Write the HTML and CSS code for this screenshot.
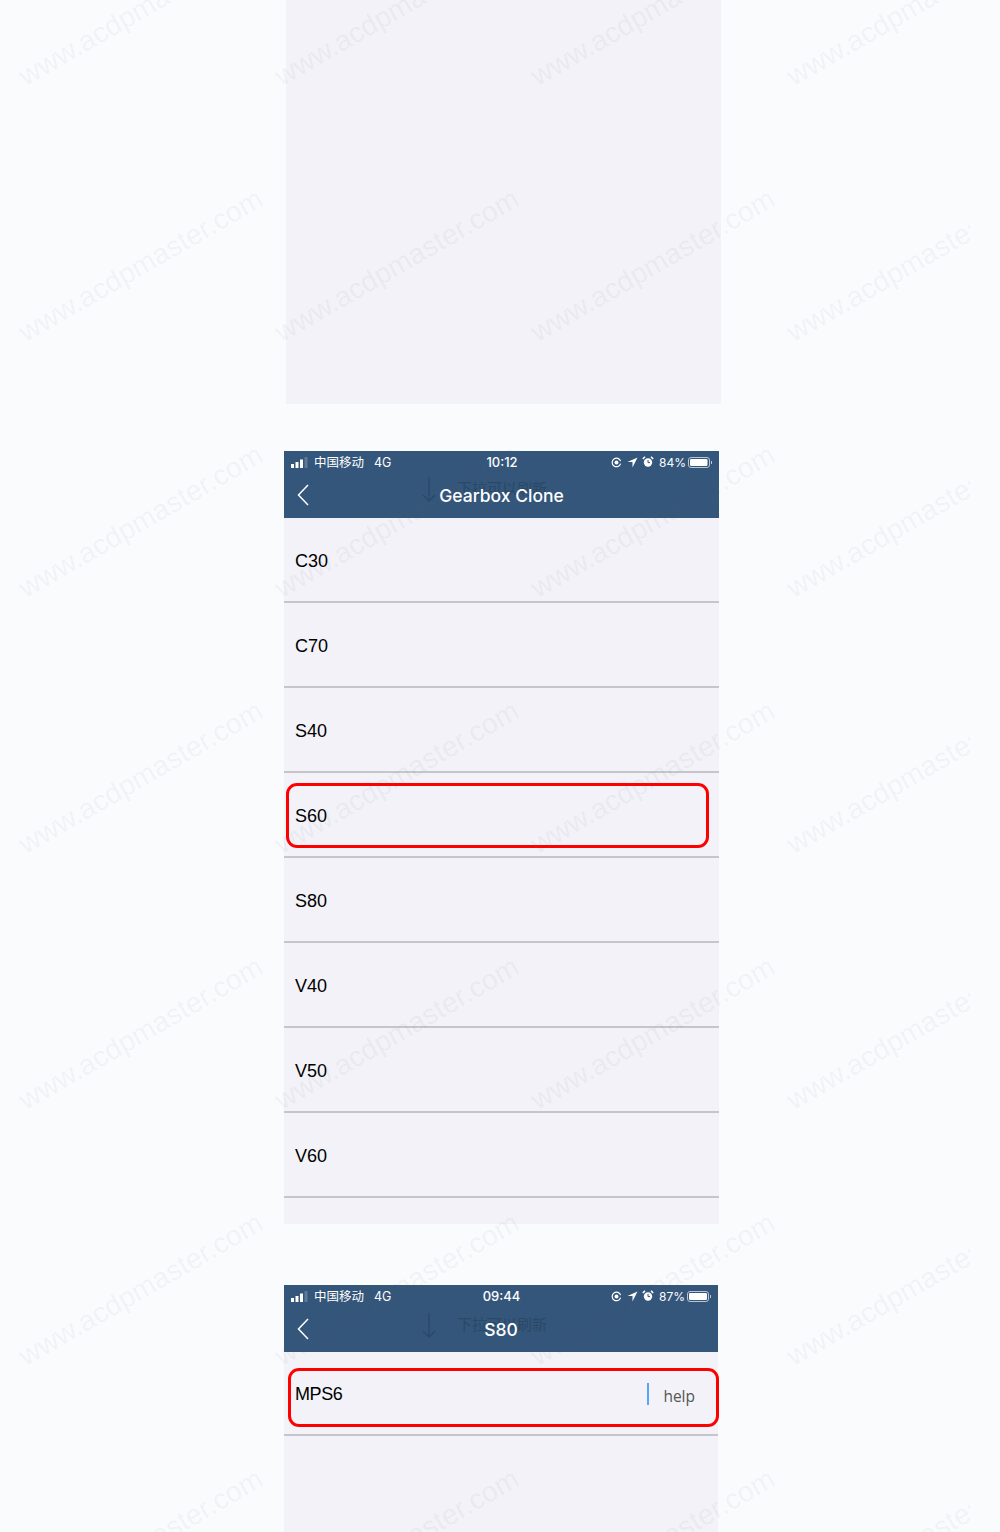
FILE: index.html
```html
<!DOCTYPE html>
<html lang="en">
<head>
    <meta charset="UTF-8">
    <meta name="viewport" content="width=device-width, initial-scale=1.0">
    <title>Gearbox Clone</title>
    <link rel="stylesheet" href="styles.css">
</head>
<body>
    <div class="blank-panel"></div>

    <section class="screen screen-list">
        <header class="app-header">
            <div class="status-bar">
                <div class="status-left">
                    <svg class="signal" width="17" height="11" viewBox="0 0 17 11"><rect x="0" y="7" width="3" height="4" fill="#fff"/><rect x="4.500" y="5" width="3" height="6" fill="#fff"/><rect x="9" y="2.500" width="3" height="8.500" fill="#fff"/><rect x="13.500" y="0" width="3" height="11" fill="#5f7a97"/></svg>
                    <span class="carrier">中国移动</span>
                    <span class="network">4G</span>
                </div>
                <div class="time">10:12</div>
                <div class="status-right">
                    <svg width="11" height="11" viewBox="0 0 11 11"><path d="M9.6 6.6A4.3 4.3 0 1 1 9.6 4.2" fill="none" stroke="#fff" stroke-width="1.2"/><circle cx="5.5" cy="5.5" r="2" fill="#fff"/></svg>
                    <svg class="loc" width="11" height="11" viewBox="0 0 11 11"><path d="M10.5.5 .5 5h5v5.5z" fill="#fff"/></svg>
                    <svg class="alarm" width="12" height="12" viewBox="0 0 12 12"><circle cx="6" cy="6.5" r="4.2" fill="#fff"/><path d="M.8 3 3 .8M11.2 3 9 .8" stroke="#fff" stroke-width="1.6"/><path d="M6 4v2.6h2" fill="none" stroke="#34567a"/></svg>
                    <span class="battery-text">84%</span>
                    <svg width="25" height="11" viewBox="0 0 25 11"><rect x=".5" y=".5" width="21" height="10" rx="2.5" fill="none" stroke="#b9c6d4"/><rect x="2" y="2" width="17.5" height="7" rx="1.2" fill="#fff"/><rect x="23" y="4" width="1" height="3" fill="#b9c6d4"/></svg>
                </div>
            </div>
            <nav class="nav-bar">
                <svg class="back" width="12" height="22" viewBox="0 0 12 22"><path d="M11 1 1.500 11 11 21" fill="none" stroke="#fff" stroke-width="1.500"/></svg>
                <div class="pull-hint hint-list">
                    <svg width="14" height="25" viewBox="0 0 14 25"><path d="M7 0v24M1 18l6 6 6-6" fill="none" stroke="#2a4868" stroke-width="1.300"/></svg>
                    <span>下拉可以刷新</span>
                </div>
                <h1 class="nav-title">Gearbox Clone</h1>
            </nav>
        </header>
        <ul class="item-list">
            <li class="item">C30</li>
            <li class="item">C70</li>
            <li class="item">S40</li>
            <li class="item item-marked">S60<span class="red-box box-s60"></span></li>
            <li class="item">S80</li>
            <li class="item">V40</li>
            <li class="item">V50</li>
            <li class="item">V60</li>
        </ul>
    </section>

    <section class="screen screen-detail">
        <header class="app-header">
            <div class="status-bar">
                <div class="status-left">
                    <svg class="signal" width="17" height="11" viewBox="0 0 17 11"><rect x="0" y="7" width="3" height="4" fill="#fff"/><rect x="4.500" y="5" width="3" height="6" fill="#fff"/><rect x="9" y="2.500" width="3" height="8.500" fill="#fff"/><rect x="13.500" y="0" width="3" height="11" fill="#5f7a97"/></svg>
                    <span class="carrier">中国移动</span>
                    <span class="network">4G</span>
                </div>
                <div class="time">09:44</div>
                <div class="status-right">
                    <svg width="11" height="11" viewBox="0 0 11 11"><path d="M9.6 6.6A4.3 4.3 0 1 1 9.6 4.2" fill="none" stroke="#fff" stroke-width="1.2"/><circle cx="5.5" cy="5.5" r="2" fill="#fff"/></svg>
                    <svg class="loc" width="11" height="11" viewBox="0 0 11 11"><path d="M10.5.5 .5 5h5v5.5z" fill="#fff"/></svg>
                    <svg class="alarm" width="12" height="12" viewBox="0 0 12 12"><circle cx="6" cy="6.5" r="4.2" fill="#fff"/><path d="M.8 3 3 .8M11.2 3 9 .8" stroke="#fff" stroke-width="1.6"/><path d="M6 4v2.6h2" fill="none" stroke="#34567a"/></svg>
                    <span class="battery-text">87%</span>
                    <svg width="25" height="11" viewBox="0 0 25 11"><rect x=".5" y=".5" width="21" height="10" rx="2.5" fill="none" stroke="#b9c6d4"/><rect x="2" y="2" width="18" height="7" rx="1.2" fill="#fff"/><rect x="23" y="4" width="1" height="3" fill="#b9c6d4"/></svg>
                </div>
            </div>
            <nav class="nav-bar">
                <svg class="back" width="12" height="22" viewBox="0 0 12 22"><path d="M11 1 1.500 11 11 21" fill="none" stroke="#fff" stroke-width="1.500"/></svg>
                <div class="pull-hint hint-detail">
                    <svg width="14" height="25" viewBox="0 0 14 25"><path d="M7 0v24M1 18l6 6 6-6" fill="none" stroke="#2a4868" stroke-width="1.300"/></svg>
                    <span>下拉可以刷新</span>
                </div>
                <h1 class="nav-title">S80</h1>
            </nav>
        </header>
        <div class="detail-row">
            <span class="detail-name">MPS6</span>
            <span class="caret"></span>
            <span class="help">help</span>
            <span class="red-box box-mps"></span>
        </div>
    </section>

    <div class="watermarks">
        <span>www.acdpmaster.com</span><span>www.acdpmaster.com</span><span>www.acdpmaster.com</span><span>www.acdpmaster.com</span>
        <span>www.acdpmaster.com</span><span>www.acdpmaster.com</span><span>www.acdpmaster.com</span><span>www.acdpmaster.com</span>
        <span>www.acdpmaster.com</span><span>www.acdpmaster.com</span><span>www.acdpmaster.com</span><span>www.acdpmaster.com</span>
        <span>www.acdpmaster.com</span><span>www.acdpmaster.com</span><span>www.acdpmaster.com</span><span>www.acdpmaster.com</span>
        <span>www.acdpmaster.com</span><span>www.acdpmaster.com</span><span>www.acdpmaster.com</span><span>www.acdpmaster.com</span>
        <span>www.acdpmaster.com</span><span>www.acdpmaster.com</span><span>www.acdpmaster.com</span><span>www.acdpmaster.com</span>
        <span>www.acdpmaster.com</span><span>www.acdpmaster.com</span><span>www.acdpmaster.com</span><span>www.acdpmaster.com</span>
    </div>
</body>
</html>
```

FILE: styles.css
```css
* {
    margin: 0;
    padding: 0;
    box-sizing: border-box;
}

html, body {
    height: 1532px;
    overflow: hidden;
}

body {
    position: relative;
    background-color: #fafbfd;
    font-family: "Liberation Sans", Arial, sans-serif;
    color: #000;
}

.blank-panel {
    width: 435px;
    height: 404px;
    margin-left: 286px;
    background-color: #f2f2f8;
}

.screen {
    margin-left: 284px;
    background-color: #f2f2f8;
}

.screen-list {
    width: 435px;
    height: 773px;
    margin-top: 47px;
}

.screen-detail {
    width: 434px;
    height: 247px;
    margin-top: 61px;
}

/* header */
.app-header {
    height: 67px;
    background-color: #34567a;
    color: #fff;
}

.status-bar {
    display: grid;
    grid-template-columns: 1fr auto 1fr;
    align-items: center;
    height: 22px;
    padding: 0 6px 0 7px;
    font-family: Inter, "Noto Sans CJK SC", sans-serif;
    font-size: 12px;
}

.status-left {
    display: flex;
    align-items: center;
}

.signal {
    margin-right: 6px;
}

.carrier {
    font-family: "Noto Sans CJK SC", sans-serif;
    font-size: 12.500px;
    line-height: 14px;
    margin: -1px 10px 0 0;
}

.network {
    font-size: 12.500px;
}

.time {
    font-weight: 500;
    font-size: 13px;
}

.status-right {
    display: flex;
    align-items: center;
    justify-content: flex-end;
}

.loc {
    margin-left: 5px;
}

.alarm {
    margin-left: 4px;
}

.battery-text {
    margin: 0 2px 0 5px;
}

.nav-bar {
    position: relative;
    display: flex;
    align-items: center;
    justify-content: center;
    height: 45px;
}

.back {
    position: absolute;
    left: 13px;
    top: 11px;
}

.nav-title {
    position: relative;
    font-family: Inter, sans-serif;
    font-size: 17.500px;
    font-weight: 500;
}

.pull-hint {
    position: absolute;
    left: 138px;
    display: flex;
    align-items: center;
    gap: 21px;
    color: #2a4868;
    font-family: "Noto Sans CJK SC", sans-serif;
    font-size: 15px;
}

.hint-list {
    top: 4px;
}

.hint-detail {
    top: 6px;
}

.pull-hint span {
    margin-bottom: 4px;
}

/* list */
.item-list {
    list-style: none;
}

.item {
    position: relative;
    display: flex;
    align-items: center;
    height: 85px;
    padding: 3px 0 0 11px;
    border-bottom: 2px solid #c6c6ca;
    font-size: 18px;
}

.red-box {
    position: absolute;
    border: 3px solid #fe0000;
    border-radius: 11px;
}

.box-s60 {
    top: 10px;
    left: 2px;
    width: 423px;
    height: 65px;
}

.detail-row {
    position: relative;
    display: flex;
    align-items: flex-start;
    height: 84px;
    padding: 32px 23px 0 11px;
    border-bottom: 2px solid #c6c6ca;
    font-size: 18px;
}

.detail-name {
    flex: 1;
    letter-spacing: -0.4px;
}

.caret {
    flex: none;
    width: 2px;
    height: 22px;
    margin: -1px 14px 0 0;
    background-color: #5aa5f2;
}

.help {
    margin-top: 1px;
    color: #555;
    font-family: "Open Sans", sans-serif;
    font-size: 15.500px;
}

.box-mps {
    top: 16px;
    left: 4px;
    width: 431px;
    height: 59px;
}

/* watermark grid over the whole image */
.watermarks {
    position: absolute;
    top: -166px;
    left: 0;
    width: 970px;
    height: 1698px;
    padding-left: 28px;
    display: grid;
    grid-template-columns: repeat(4, 256px);
    grid-auto-rows: 256px;
    overflow: hidden;
    pointer-events: none;
}

.watermarks span {
    align-self: end;
    font-size: 28.400px;
    line-height: 1;
    white-space: nowrap;
    color: rgba(110, 110, 130, 0.065);
    transform: rotate(-30deg);
    transform-origin: 0 100%;
}
```
